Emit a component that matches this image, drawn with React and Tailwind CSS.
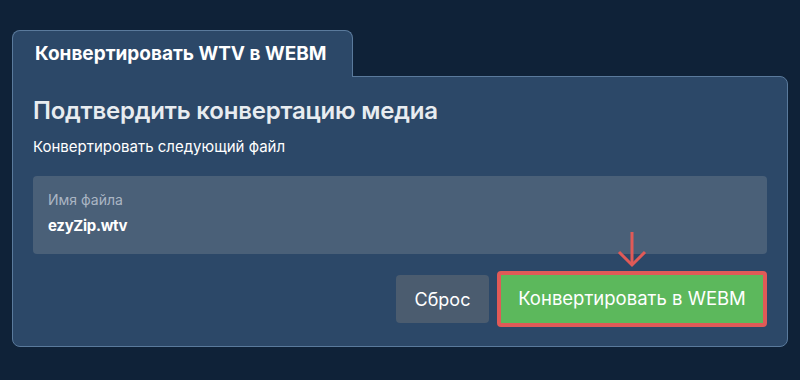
export default function App() {
  return (
    <div
      className="w-[800px] h-[380px] bg-[#0f2238] pt-[30px] px-3"
      style={{ fontFamily: 'Inter, "Noto Sans", sans-serif' }}
    >
      <div className="flex">
        <div className="relative z-10 -mb-px w-[341px] h-[47px] flex items-center pl-[22px] bg-[#2c4868] border border-b-0 border-[#5a7a9c] rounded-t-lg">
          <span className="text-[19px] font-bold text-white">Конвертировать WTV в WEBM</span>
        </div>
      </div>
      <div className="bg-[#2c4868] border border-[#5a7a9c] rounded-lg rounded-tl-none px-5 pt-[18px] pb-[19px]">
        <h1 className="text-[24px] leading-8 font-semibold text-[#e8ecf0] tracking-[-0.2px]">Подтвердить конвертацию медиа</h1>
        <p className="mt-[10px] text-[15px] leading-5 text-white">Конвертировать следующий файл</p>
        <div className="mt-[19px] h-[78px] rounded bg-[#4a6078] px-[15px] pt-[14px]">
          <div className="text-[14px] leading-5 text-[#aab6c4]">Имя файла</div>
          <div className="mt-[6px] text-[15px] leading-5 font-bold text-white tracking-[-0.3px]">ezyZip.wtv</div>
        </div>
        <div className="mt-[17px] flex justify-end items-center gap-2">
          <button className="w-[93px] h-[48px] rounded bg-[#4b5c6f] text-[18px] text-white">Сброс</button>
          <div className="relative">
            <svg
              className="absolute left-1/2 -translate-x-1/2 -top-[40px]"
              width="30"
              height="38"
              viewBox="0 0 30 38"
              fill="none"
              stroke="#e05a57"
              strokeWidth="3"
            >
              <path d="M15 1 V34" />
              <path d="M2 21 L15 34 L28 21" />
            </svg>
            <button className="w-[270px] h-[56px] rounded border-4 border-[#e05a57] bg-[#5cb85c] text-[18.5px] text-white">
              Конвертировать в WEBM
            </button>
          </div>
        </div>
      </div>
    </div>
  );
}
